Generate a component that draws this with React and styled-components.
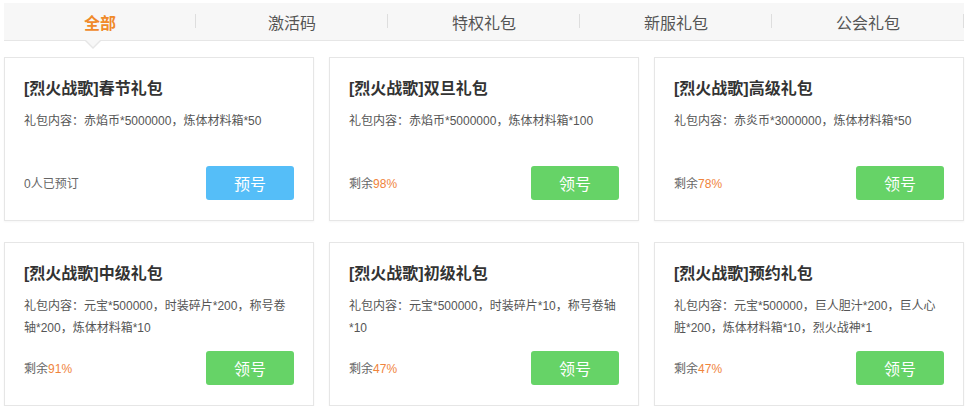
import React, {useState} from 'react';
import styled, {createGlobalStyle} from 'styled-components';

const GlobalStyle = createGlobalStyle`
  html, body {
    margin: 0;
    padding: 0;
    background: #fff;
  }
  body {
    font-family: "Liberation Sans", "Noto Sans CJK SC", sans-serif;
    color: #333;
  }
`

const TABS = ['全部', '激活码', '特权礼包', '新服礼包', '公会礼包'];

const GIFTS = [
  {title: '[烈火战歌]春节礼包', content: '礼包内容：赤焰币*5000000，炼体材料箱*50', booked: 0, kind: 'book'},
  {title: '[烈火战歌]双旦礼包', content: '礼包内容：赤焰币*5000000，炼体材料箱*100', left: 98},
  {title: '[烈火战歌]高级礼包', content: '礼包内容：赤炎币*3000000，炼体材料箱*50', left: 78},
  {title: '[烈火战歌]中级礼包', content: '礼包内容：元宝*500000，时装碎片*200，称号卷轴*200，炼体材料箱*10', left: 91},
  {title: '[烈火战歌]初级礼包', content: '礼包内容：元宝*500000，时装碎片*10，称号卷轴*10', left: 47},
  {title: '[烈火战歌]预约礼包', content: '礼包内容：元宝*500000，巨人胆汁*200，巨人心脏*200，炼体材料箱*10，烈火战神*1', left: 47},
];

const Page = styled.div`
  width: 960px;
  padding: 3px 0 0 4px;
`

const TabBar = styled.ul`
  display: grid;
  grid-template-columns: repeat(5, 1fr);
  height: 37px;
  margin: 0;
  padding: 0;
  list-style: none;
  background: #f7f7f7;
  border-bottom: 1px solid #e6e6e6;
`

const Tab = styled.li`
  position: relative;
  display: flex;
  align-items: center;
  justify-content: center;
  font-size: 16px;
  font-weight: ${p => p.$active ? 'bold' : 'normal'};
  color: ${p => p.$active ? '#f08a2a' : '#555'};
  cursor: pointer;

  /* short divider on the right of each tab */
  &::after {
    content: '';
    position: absolute;
    right: 0;
    top: 11px;
    height: 14px;
    border-right: 1px solid #dedede;
  }

  ${p => p.$active && `
    &::before {
      content: '';
      position: absolute;
      left: 81px;
      bottom: -9px;
      border-left: 8px solid transparent;
      border-right: 8px solid transparent;
      border-top: 8px solid #e6e6e6;
      z-index: 2;
    }
  `}
`

// fill of the little arrow under the current tab
const Notch = styled.span`
  position: absolute;
  left: 82px;
  bottom: -7px;
  border-left: 7px solid transparent;
  border-right: 7px solid transparent;
  border-top: 7px solid #f7f7f7;
  z-index: 3;
`

const Grid = styled.div`
  display: grid;
  grid-template-columns: repeat(3, 310px);
  column-gap: 15px;
  row-gap: 21px;
  margin-top: 16px;
`

const Card = styled.div`
  box-sizing: border-box;
  height: 164px;
  padding: 20px 19px 20px 19px;
  display: flex;
  flex-direction: column;
  border: 1px solid #e6e6e6;
  box-shadow: 0 1px 2px rgba(0, 0, 0, 0.04);
  background: #fff;
`

const Title = styled.h3`
  margin: 0;
  font-size: 16px;
  line-height: 22px;
  font-weight: bold;
  color: #333;
`

const Content = styled.p`
  margin: 10px 0 0;
  font-size: 12px;
  line-height: 22px;
  color: #555;
`

const Footer = styled.div`
  margin-top: auto;
  display: flex;
  align-items: center;
  justify-content: space-between;
`

const Status = styled.span`
  font-size: 12px;
  color: #666;
  margin-top: -2px;
`

const Percent = styled.em`
  font-style: normal;
  color: #f0843c;
`

const Button = styled.button`
  width: 88px;
  height: 34px;
  border: 0;
  border-radius: 3px;
  font-family: inherit;
  font-size: 16px;
  color: #fff;
  background: ${p => p.$kind === 'book' ? '#55bef8' : '#66d367'};
  cursor: pointer;
`

const GiftCard = ({gift}) => (
  <Card>
    <Title>{gift.title}</Title>
    <Content>{gift.content}</Content>
    <Footer>
      {gift.kind === 'book'
        ? <Status>{gift.booked}人已预订</Status>
        : <Status>剩余<Percent>{gift.left}%</Percent></Status>}
      <Button $kind={gift.kind}>{gift.kind === 'book' ? '预号' : '领号'}</Button>
    </Footer>
  </Card>
)

const App = () => {
  const [active, setActive] = useState(0);

  return (
    <Page>
      <GlobalStyle />
      <TabBar>
        {TABS.map((name, i) => (
          <Tab key={name} $active={i === active} onClick={() => setActive(i)}>
            {name}
            {i === active && <Notch />}
          </Tab>
        ))}
      </TabBar>
      <Grid>
        {GIFTS.map(gift => <GiftCard key={gift.title} gift={gift} />)}
      </Grid>
    </Page>
  )
}

export default App;
